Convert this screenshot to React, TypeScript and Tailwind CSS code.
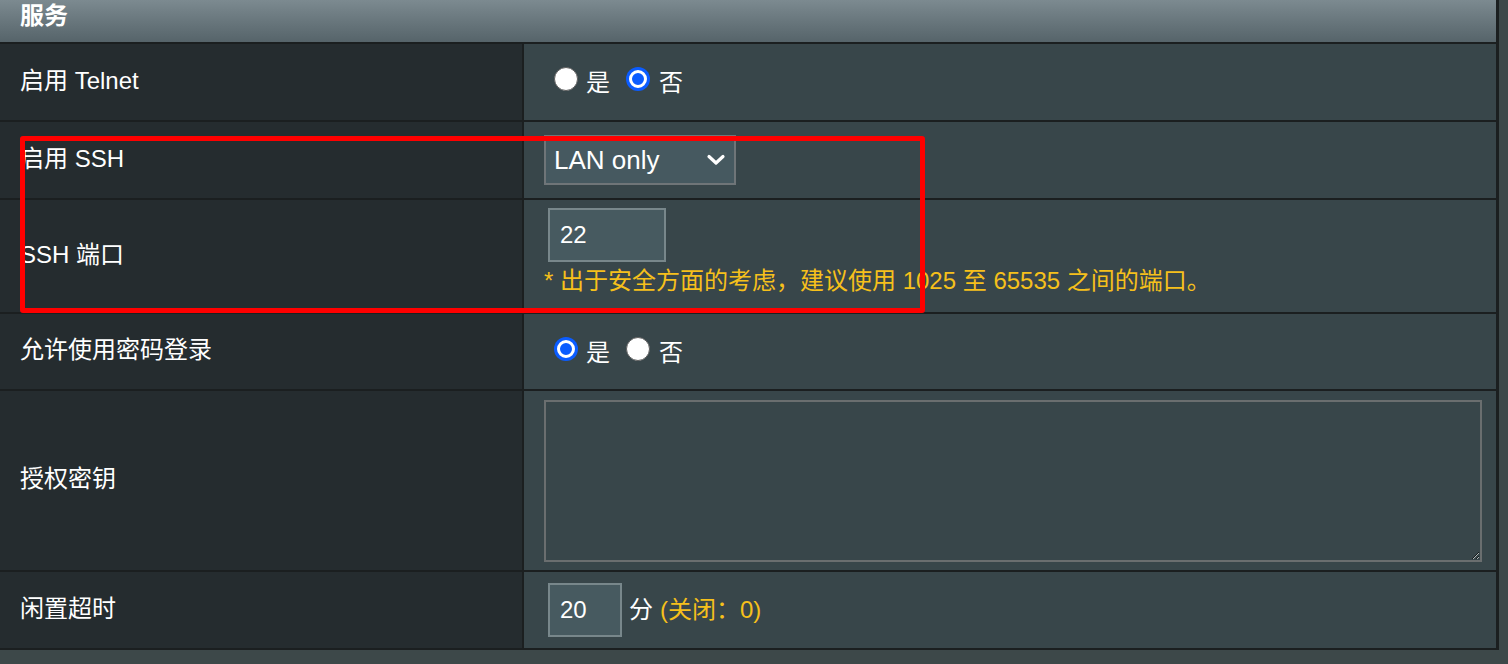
import React from "react";

const font = { fontFamily: '"Liberation Sans", "Noto Sans CJK SC", sans-serif' };

const Radio = ({ checked }: { checked: boolean }) =>
  checked ? (
    <div className="flex h-[24px] w-[24px] shrink-0 -translate-y-[4px] items-center justify-center rounded-full bg-[#0b5cff]">
      <div className="h-[18px] w-[18px] rounded-full border-[3px] border-white bg-[#0b5cff]" />
    </div>
  ) : (
    <div className="h-[24px] w-[24px] shrink-0 -translate-y-[4px] rounded-full border-[1.5px] border-[#5f5f5f] bg-white" />
  );

const YesNo = ({ yes }: { yes: boolean }) => (
  <div className="flex items-center">
    <div className="ml-[10px]">
      <Radio checked={yes} />
    </div>
    <span className="ml-[8px]">是</span>
    <div className="ml-4">
      <Radio checked={!yes} />
    </div>
    <span className="ml-[9px]">否</span>
  </div>
);

const Row = ({
  label,
  h,
  children,
}: {
  label: string;
  h: string;
  children: React.ReactNode;
}) => (
  <div className={`flex border-t-2 border-[#1b1f20] ${h}`}>
    <div className="flex w-[522px] shrink-0 items-center bg-[#252c2f] pb-[3px] pl-5">{label}</div>
    <div className="flex flex-1 border-l-2 border-[#1b1f20] bg-[#38464a] pl-5">{children}</div>
  </div>
);

export default function App() {
  return (
    <div
      className="relative h-[664px] w-full overflow-hidden bg-[#3d4849] text-[24px] text-white"
      style={font}
    >
      <div className="w-[1499px] border-r-[3px] border-b-2 border-[#1b1f20]">
        <div className="h-[42px] bg-gradient-to-b from-[#7c8a90] to-[#56646a] pl-5 text-[24px] font-bold leading-[32px]">
          服务
        </div>

        <Row label="启用 Telnet" h="h-[78px]">
          <div className="flex items-center pt-[2px]">
            <YesNo yes={false} />
          </div>
        </Row>

        <Row label="启用 SSH" h="h-[78px]">
          <div className="flex items-center">
            <div className="flex h-[50px] w-[192px] items-center justify-between border-2 border-[#6f7578] bg-[#465960] pl-2 pr-2 text-[26px]">
              <span>LAN only</span>
              <svg width="20" height="14" viewBox="0 0 20 14" fill="none">
                <path d="M3 3.5 L10 10 L17 3.5" stroke="white" strokeWidth="3.2" strokeLinecap="round" strokeLinejoin="round" />
              </svg>
            </div>
          </div>
        </Row>

        <Row label="SSH 端口" h="h-[114px]">
          <div className="flex flex-col pt-2">
            <div className="ml-1 flex h-[54px] w-[118px] items-center border-2 border-[#78878b] bg-[#475a60] pl-[10px] text-[24px]">
              22
            </div>
            <div className="mt-[4px] text-[24px] leading-[30px] text-[#f6c01b]">
              * 出于安全方面的考虑，建议使用 1025 至 65535 之间的端口。
            </div>
          </div>
        </Row>

        <Row label="允许使用密码登录" h="h-[77px]">
          <div className="flex items-center pt-[2px]">
            <YesNo yes={true} />
          </div>
        </Row>

        <Row label="授权密钥" h="h-[181px]">
          <div className="flex w-full pt-[9px]">
            <textarea className="h-[162px] w-[938px] border-2 border-[#6a6e6f] bg-transparent outline-none" />
          </div>
        </Row>

        <Row label="闲置超时" h="h-[78px]">
          <div className="flex items-center">
            <div className="ml-1 flex h-[54px] w-[74px] items-center border-2 border-[#78878b] bg-[#475a60] pl-[10px] text-[24px]">
              20
            </div>
            <span className="ml-[7px]">分</span>
            <span className="ml-[7px] text-[#f6c01b]">(关闭：0)</span>
          </div>
        </Row>
      </div>

      <div className="pointer-events-none absolute left-[20px] top-[136px] h-[177px] w-[905px] rounded-[3px] border-[5px] border-[#ff0000]" />
    </div>
  );
}
